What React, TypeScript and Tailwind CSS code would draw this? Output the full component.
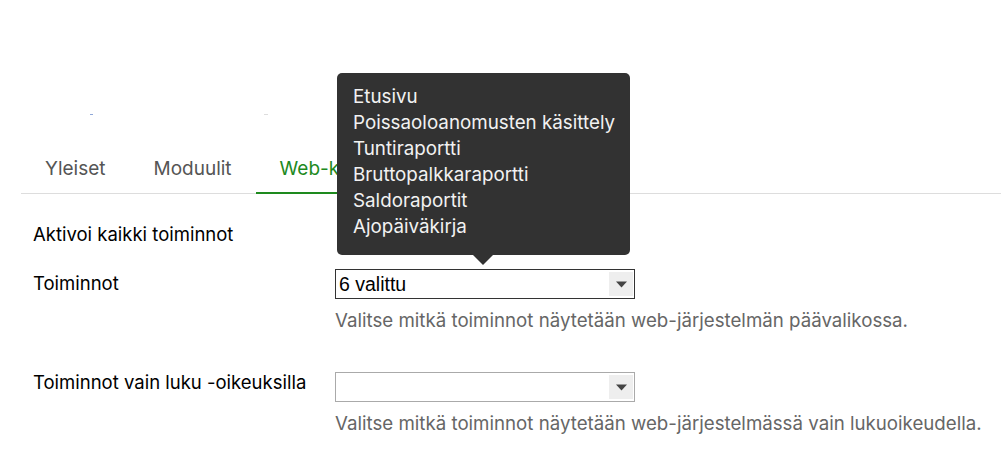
import { useState } from 'react';

const tabs = ['Yleiset', 'Moduulit', 'Web-käyttöliittymä'];

const selectedFunctions = [
    'Etusivu',
    'Poissaoloanomusten käsittely',
    'Tuntiraportti',
    'Bruttopalkkaraportti',
    'Saldoraportit',
    'Ajopäiväkirja',
];

function SelectBox({ value, strong }: { value: string; strong?: boolean }) {
    return (
        <div
            className={`flex items-stretch w-[300px] h-[30px] bg-white border ${strong ? 'border-[#333333]' : 'border-[#aaaaaa]'}`}
        >
            <span className="flex-1 pl-[3px] text-[19.5px] leading-[28px] text-black font-['Liberation_Sans',Arial,sans-serif]">
                {value}
            </span>
            <span className="flex items-center justify-center w-[24px] my-[2px] mr-[1px] bg-[#eeeeee]">
                <svg width="11" height="7" viewBox="0 0 11 7">
                    <path d="M0 0.5 H11 L5.5 6.5 Z" fill="#444444" />
                </svg>
            </span>
        </div>
    );
}

export default function App() {
    const [activeTab] = useState(2);

    return (
        <div className="w-[1001px] h-[456px] bg-white overflow-hidden font-['Inter','Noto_Sans',sans-serif]">
            {/* clipped header leftovers */}
            <div className="relative h-[146px]">
                <span className="absolute left-[90px] top-[114px] w-[3px] h-[1px] bg-[#8fa8d8]" />
                <span className="absolute left-[264px] top-[114px] w-[4px] h-[1px] bg-[#dddddd]" />
                <span className="absolute left-[628px] top-[94px] w-[2px] h-[21px] bg-[#5c86c4]" />
            </div>

            <div className="ml-[21px] flex border-b border-[#dddddd]">
                {tabs.map((tab, i) => (
                    <div
                        key={tab}
                        className={`px-6 h-[48px] flex items-center text-[19px] -mb-px border-b-2 ${
                            i === activeTab ? 'text-[#1e8a1e] border-[#1e8a1e]' : 'text-[#555555] border-transparent'
                        }`}
                    >
                        {tab}
                    </div>
                ))}
            </div>

            <div className="pl-[33px] pt-[26px] text-[18.5px] text-black">
                <div className="flex h-[30px] items-center">
                    <div className="w-[302px]">Aktivoi kaikki toiminnot</div>
                </div>

                <div className="flex mt-[19px]">
                    <div className="w-[302px] leading-[26px] mt-[1px]">Toiminnot</div>
                    <div>
                        <div className="relative">
                            <SelectBox value="6 valittu" strong />
                            <div className="absolute left-[2px] bottom-[44px] w-[293px] rounded-[5px] bg-[#323232] pl-[16px] pt-[11px] pb-[15px] text-[18.8px] text-[#f2f2f2] leading-[26px]">
                                {selectedFunctions.map((f) => (
                                    <div key={f}>{f}</div>
                                ))}
                                <span className="absolute left-[136px] -bottom-[10px] w-0 h-0 border-l-[10px] border-r-[10px] border-t-[10px] border-l-transparent border-r-transparent border-t-[#323232]" />
                            </div>
                        </div>
                        <div className="mt-[10px] text-[18.7px] leading-[24px] text-[#666666]">
                            Valitse mitkä toiminnot näytetään web-järjestelmän päävalikossa.
                        </div>
                    </div>
                </div>

                <div className="flex mt-[39px]">
                    <div className="w-[302px] leading-[26px] -mt-[3px]">Toiminnot vain luku -oikeuksilla</div>
                    <div>
                        <SelectBox value="" />
                        <div className="mt-[10px] text-[18.7px] leading-[24px] text-[#666666]">
                            Valitse mitkä toiminnot näytetään web-järjestelmässä vain lukuoikeudella.
                        </div>
                    </div>
                </div>
            </div>
        </div>
    );
}
